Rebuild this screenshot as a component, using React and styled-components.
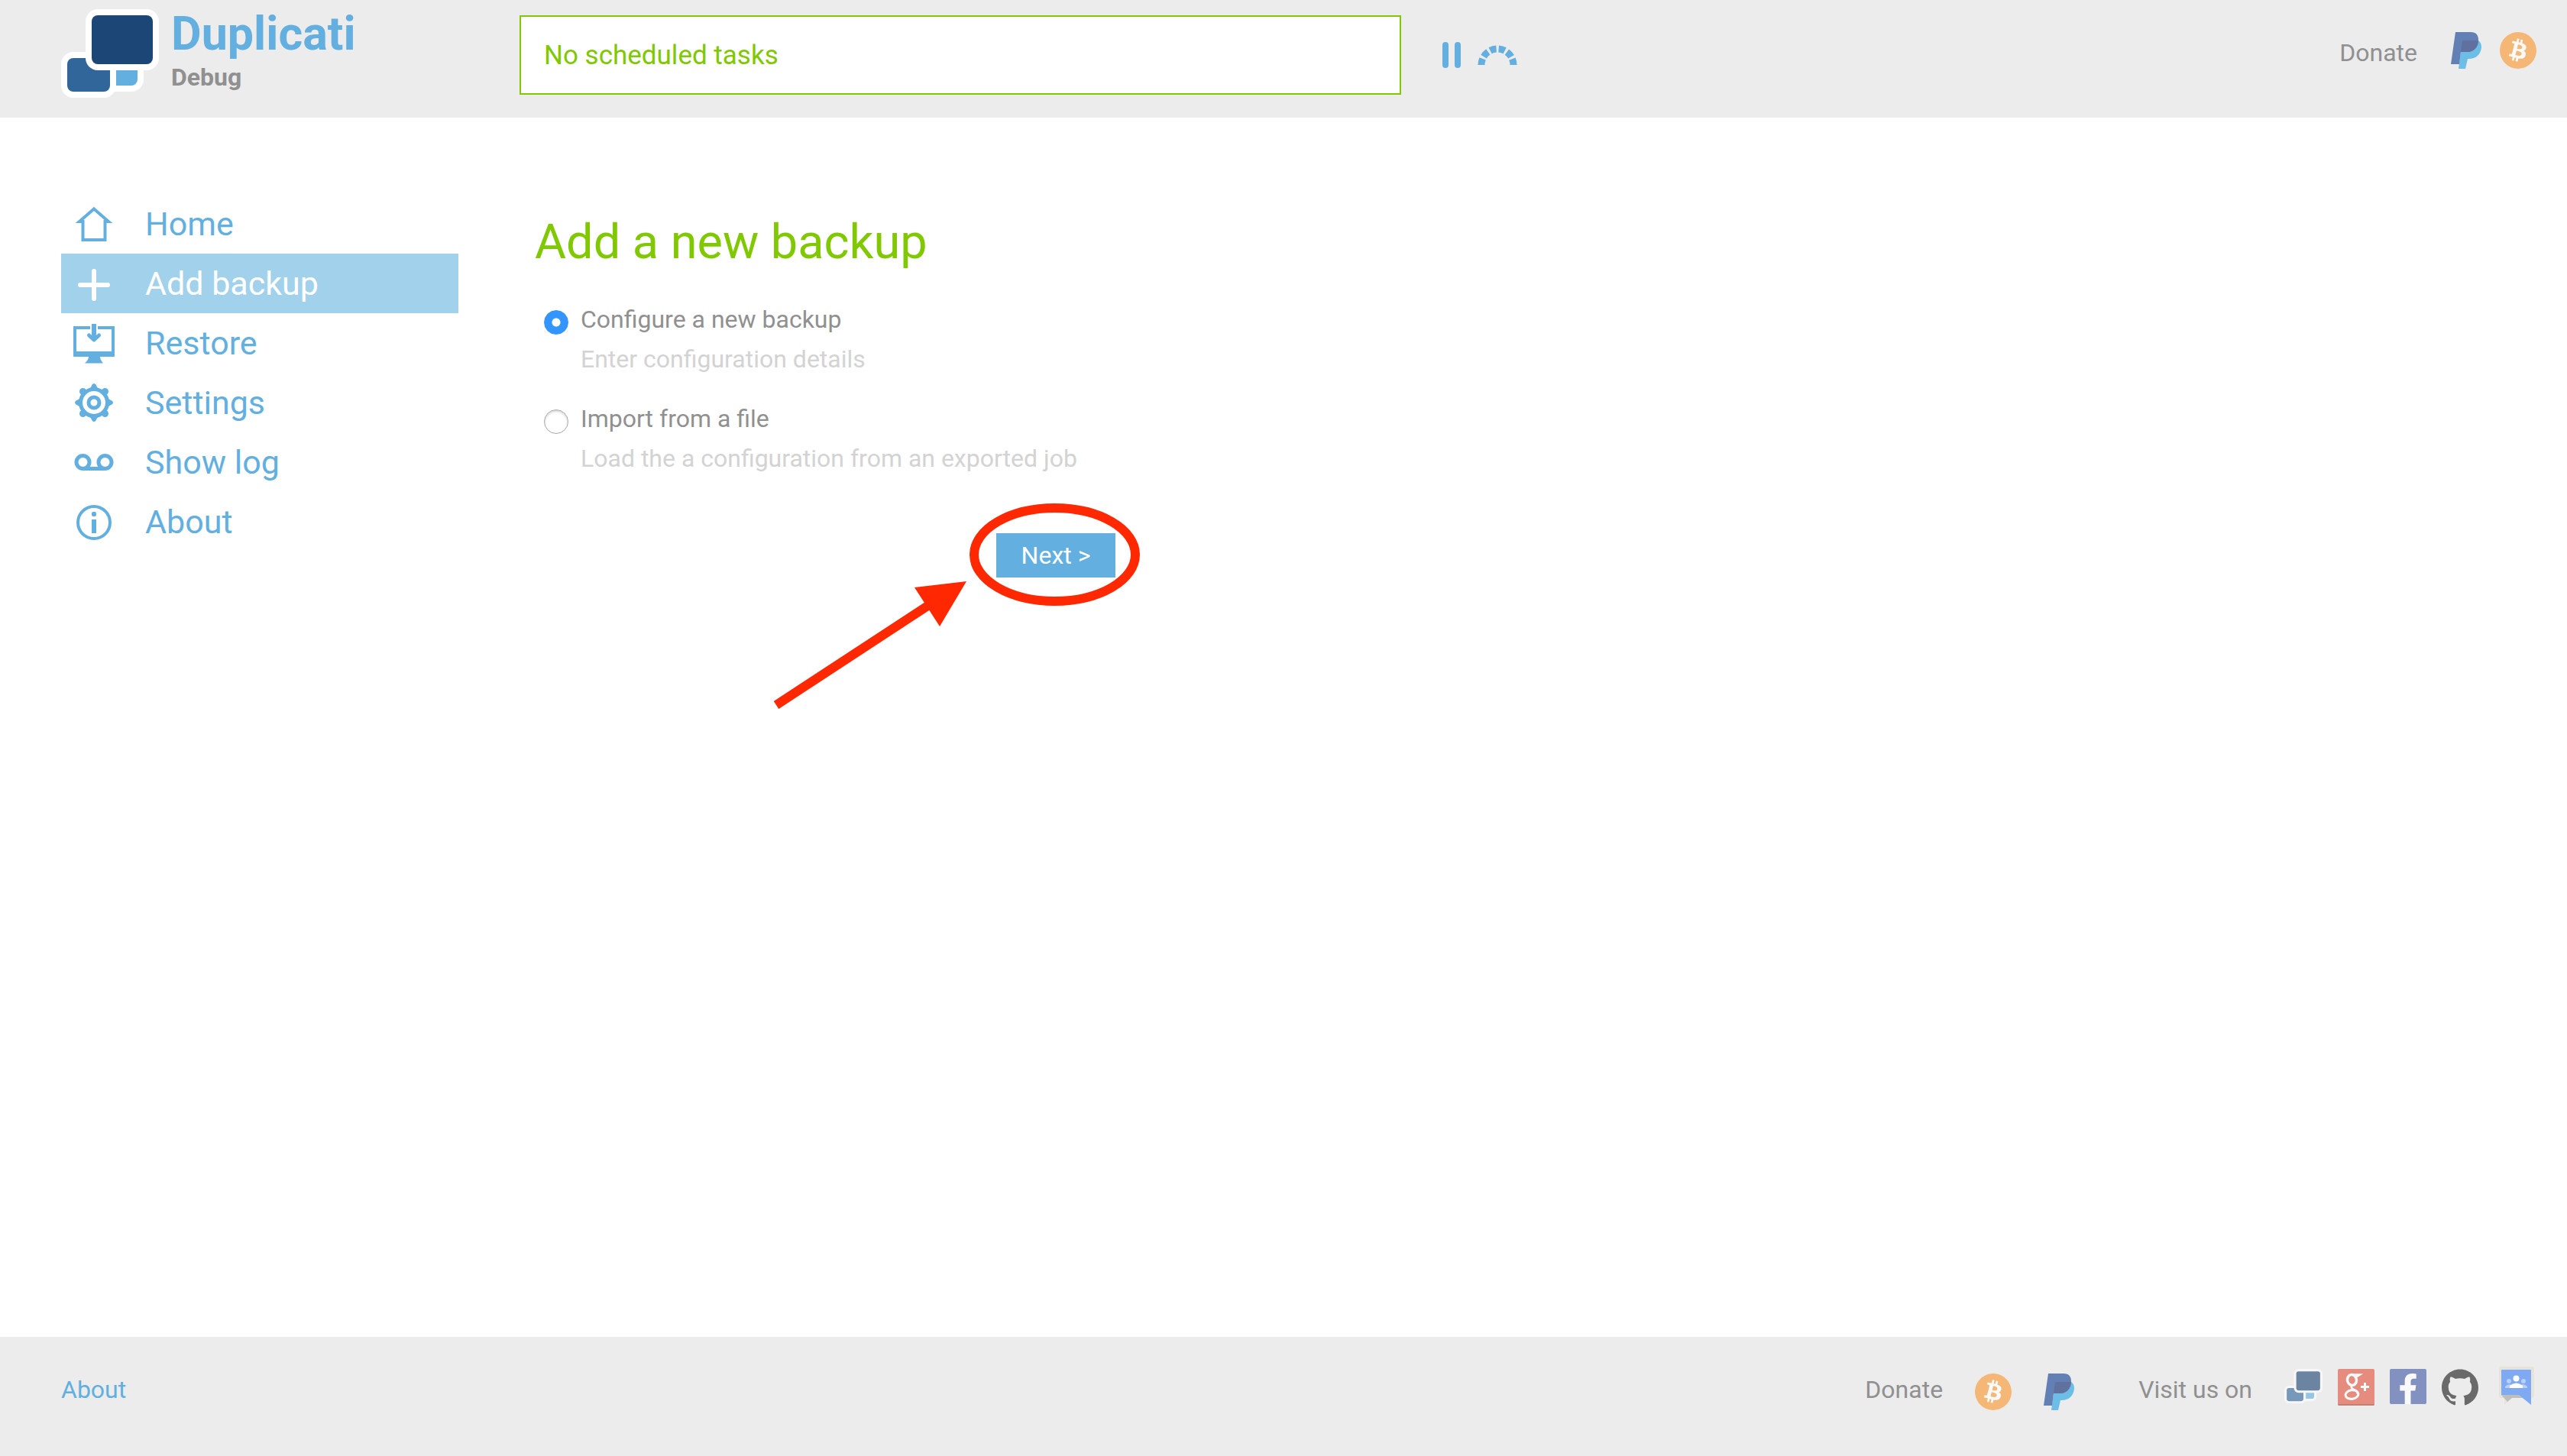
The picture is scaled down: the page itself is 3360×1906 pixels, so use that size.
import React, { useState } from "react";
import styled, { createGlobalStyle } from "styled-components";
import { SiBitcoin, SiGithub } from "react-icons/si";
import { FaFacebookF } from "react-icons/fa";

const color = {
  blue: "#62afe0",
  paleBlue: "#a2d1eb",
  green: "#80c800",
  grey: "#909090",
  lightGrey: "#d3d3d3",
  bar: "#ececec",
  radio: "#3395ff",
  red: "#ff2800",
};

const GlobalStyle = createGlobalStyle`
  *, *::before, *::after { box-sizing: border-box; }
  body {
    margin: 0;
    background: #fff;
    color: ${color.grey};
    font-family: Roboto, "Liberation Sans", sans-serif;
    font-size: 32px;
  }
  a { color: inherit; text-decoration: none; }
  button, input { font: inherit; }
  svg { display: block; flex: none; }
`;

const Page = styled.div`
  display: flex;
  flex-direction: column;
  min-height: 100vh;
`;

const Header = styled.header`
  display: flex;
  height: 154px;
  padding: 0 40px 0 80px;
  background: ${color.bar};
`;

const Brand = styled.a`
  display: flex;
  flex: 0 0 600px;
  align-items: flex-start;
  gap: 16px;
  padding-top: 12px;
`;

const BrandText = styled.div`
  display: flex;
  flex-direction: column;
`;

const BrandName = styled.span`
  color: ${color.blue};
  font-size: 61px;
  font-weight: 700;
  line-height: 64px;
`;

const BrandState = styled.span`
  font-weight: 700;
  line-height: 50px;
`;

const Status = styled.div`
  display: flex;
  flex: 0 1 1154px;
  align-items: center;
  height: 104px;
  margin-top: 20px;
  padding: 0 30px;
  border: 2px solid ${color.green};
  background: #fff;
  color: ${color.green};
  font-size: 35px;
`;

const Controls = styled.div`
  display: flex;
  align-items: center;
  gap: 22px;
  height: 104px;
  margin: 20px 0 0 54px;
`;

const IconButton = styled.button`
  padding: 0;
  border: 0;
  background: none;
  cursor: pointer;
`;

const HeaderDonate = styled.div`
  display: flex;
  align-items: flex-start;
  gap: 24px;
  margin-left: auto;
  padding-top: 42px;
`;

const BarText = styled.span`
  margin-right: ${(p) => p.$space || 0}px;
  line-height: 54px;
`;

const Main = styled.main`
  display: flex;
  flex: 1;
  gap: 100px;
  padding: 100px 80px;
`;

const Nav = styled.nav`
  display: flex;
  flex: 0 0 520px;
  flex-direction: column;
`;

const NavLink = styled.a`
  display: flex;
  align-items: center;
  gap: 40px;
  height: 78px;
  padding-left: 16px;
  background: ${(p) => (p.$active ? color.paleBlue : "transparent")};
  && { color: ${(p) => (p.$active ? "#fff" : color.blue)}; }
  font-size: 43px;
`;

const Form = styled.form`
  flex: 0 1 760px;
  padding-top: 28px;
`;

const Title = styled.h1`
  margin: 0 0 40px;
  color: ${color.green};
  font-size: 63px;
  font-weight: 400;
  line-height: 70px;
`;

const Options = styled.div`
  display: flex;
  flex-direction: column;
  gap: 26px;
  padding-left: 12px;
`;

const Option = styled.div`
  display: flex;
  align-items: flex-start;
  gap: 16px;
`;

const OptionText = styled.div`
  display: flex;
  flex-direction: column;
  line-height: 52px;
`;

const Hint = styled.span`
  color: ${color.lightGrey};
`;

const Radio = styled.input`
  flex: none;
  width: 32px;
  height: 32px;
  margin: 14px 0 0;
  border: 1px solid #a8a8a8;
  border-radius: 50%;
  background: #fff;
  box-shadow: inset 0 2px 3px #d8d8d8;
  appearance: none;
  &:checked {
    border-color: ${color.radio};
    background: radial-gradient(circle, #fff 5px, ${color.radio} 6px);
    box-shadow: none;
  }
`;

const Actions = styled.div`
  display: flex;
  justify-content: flex-end;
  margin-top: 72px;
`;

const ButtonWrap = styled.div`
  position: relative;
`;

const NextButton = styled.button`
  width: 156px;
  height: 58px;
  padding: 0;
  border: 0;
  background: ${color.blue};
  color: #fff;
`;

const Callout = styled.svg`
  position: absolute;
  top: -48px;
  right: -40px;
  pointer-events: none;
`;

const Footer = styled.footer`
  display: flex;
  align-items: flex-start;
  justify-content: space-between;
  padding: 42px 40px 60px 80px;
  background: ${color.bar};
`;

const FooterLink = styled.a`
  && { color: ${color.blue}; }
  line-height: 54px;
`;

const FooterGroups = styled.div`
  display: flex;
  gap: 84px;
`;

const DonateGroup = styled.div`
  display: flex;
  align-items: flex-end;
  gap: 42px;
`;

const SocialGroup = styled.div`
  display: flex;
  align-items: flex-start;
  gap: 20px;
`;

const Coin = styled.a`
  border-radius: 50%;
  background: #fafafa;
  color: #f4b776;
`;

const Faded = styled.a`
  opacity: 0.62;
`;

const Tile = styled.a`
  display: flex;
  align-items: flex-end;
  justify-content: flex-end;
  width: 48px;
  height: 46px;
  padding-right: 4px;
  border-radius: 2px;
  background: #8291bf;
  && { color: #fafafa; }
`;

const Logo = ({ width = 128 }) => (
  <svg width={width} viewBox="0 0 128 116" aria-hidden="true">
    <rect x="44" y="40" width="64" height="68" rx="16" fill="#fff" />
    <rect x="52" y="48" width="48" height="52" rx="8" fill="#62afe0" />
    <rect y="56" width="72" height="60" rx="16" fill="#fff" />
    <rect x="8" y="64" width="56" height="44" rx="8" fill="#30669a" />
    <rect x="32" width="96" height="80" rx="16" fill="#fff" />
    <rect x="40" y="8" width="80" height="64" rx="8" fill="#1c4676" />
  </svg>
);

const PayPal = () => (
  <svg width="40" height="48" viewBox="0 0 40 48" aria-hidden="true">
    <path d="M15 11H36C39 13 40 16 40 20C39 30 32 35 24 35H22L19 48H10Z" fill="#6cbee6" />
    <path d="M6 0H26C33 0 36 4 36 10C36 20 29 26 22 26H13L11 42H0Z" fill="#6280b3" />
    <path d="M15 11H36C36 20 29 26 22 26H13Z" fill="#60719f" />
  </svg>
);

const Bitcoin = () => (
  <Coin href="#bitcoin" aria-label="Donate with Bitcoin">
    <SiBitcoin size={48} />
  </Coin>
);

const Pause = () => (
  <svg width="24" height="34" viewBox="0 0 24 34" fill={color.blue} aria-hidden="true">
    <rect width="8" height="34" rx="4" />
    <rect x="16" width="8" height="34" rx="4" />
  </svg>
);

const Gauge = () => (
  <svg width="52" height="27" viewBox="0 0 52 27" aria-hidden="true">
    <path
      d="M5 26A21 21 0 0 1 47 26"
      fill="none"
      stroke={color.blue}
      strokeWidth="9"
      strokeDasharray="8.3 3.2"
    />
  </svg>
);

const GooglePlus = () => (
  <svg width="48" height="48" viewBox="0 0 48 48" aria-hidden="true">
    <rect width="48" height="48" rx="2" fill="#e68c7f" />
    <path d="M0 46H48V46Q48 48 46 48H2Q0 48 0 46Z" fill="#c08176" />
    <g fill="none" stroke="#fafafa">
      <ellipse cx="18.500" cy="14.500" rx="6" ry="7" strokeWidth="3.500" transform="rotate(-12 18.500 14.500)" />
      <ellipse cx="18.500" cy="33.500" rx="8.500" ry="5.800" strokeWidth="3" transform="rotate(-8 18.500 33.500)" />
      <path d="M18 7.500H29L26 9.500H22M20 21C15 24 19 26 23 28Q26 30 26 33" strokeWidth="2.500" />
      <path d="M30 23.500H41M35.500 18V29" strokeWidth="3" />
    </g>
  </svg>
);

const Groups = () => (
  <svg width="56" height="54" viewBox="0 0 56 54" overflow="visible" aria-hidden="true">
    <path d="M10-3H50Q53-3 53 0V35Q53 38 50 38H24L14 47V38H10Q7 38 7 35V0Q7-3 10-3Z" fill="#e6e4da" />
    <path d="M10 34H33L38 38H24L18 43Z" fill="#bfbfb9" />
    <path d="M11 1H48Q49 1 49 2V47L33 34H10V2Q10 1 11 1Z" fill="#7fa9f2" />
    <g fill="#b9d0f8">
      <circle cx="20" cy="16" r="3" />
      <circle cx="39" cy="16" r="3" />
      <path d="M15 25V23Q19 19 24 21L21 25ZM44 25V23Q40 19 35 21L38 25Z" />
    </g>
    <circle cx="29.500" cy="12.500" r="4" fill="#fff" />
    <path d="M21 25V22Q29.500 15 38 22V25Z" fill="#fff" />
  </svg>
);

const icons = {
  home: <path d="M27 7.500L46 24H41.500V48H12.500V24H8Z" strokeWidth="4" />,
  add: <path d="M27 11V47M9 29H45" strokeWidth="6" strokeLinecap="round" />,
  restore: (
    <>
      <path d="M22 7H2V40H52V7H32" strokeWidth="4" />
      <path d="M27 2V20" strokeWidth="6" />
      <path d="M20.500 17L27 23L33.500 17" strokeWidth="5" strokeLinecap="round" strokeLinejoin="round" />
      <path d="M0 38H54V44Q54 45 53 45H35Q35 49 39 53.500H15Q20 49 20 45H1Q0 45 0 44Z" fill="currentColor" stroke="none" />
    </>
  ),
  settings: (
    <>
      <circle cx="27" cy="27" r="17.500" strokeWidth="5" />
      <circle cx="27" cy="27" r="7" strokeWidth="5" />
      <g fill="currentColor" stroke="none">
        {[0, 90, 180, 270].map((angle) => (
          <g key={angle} transform={`rotate(${angle} 27 27)`}>
            <path d="M19 10Q23 8 24.500 3.500Q27 0.500 29.500 3.500Q31 8 35 10Z" />
            <circle cx="41.500" cy="12.500" r="4.500" />
          </g>
        ))}
      </g>
    </>
  ),
  log: (
    <>
      <circle cx="12.500" cy="27" r="8.500" strokeWidth="5" />
      <circle cx="41.500" cy="27" r="8.500" strokeWidth="5" />
      <path d="M12.500 35.500H41.500" strokeWidth="5" />
    </>
  ),
  about: (
    <>
      <circle cx="27" cy="28" r="21" strokeWidth="4" />
      <rect x="24" y="14" width="6" height="6" rx="2" fill="currentColor" stroke="none" />
      <rect x="24" y="24" width="6" height="18" fill="currentColor" stroke="none" />
    </>
  ),
};

const navItems = [
  ["home", "Home"],
  ["add", "Add backup"],
  ["restore", "Restore"],
  ["settings", "Settings"],
  ["log", "Show log"],
  ["about", "About"],
];

const options = [
  ["new", "Configure a new backup", "Enter configuration details"],
  ["import", "Import from a file", "Load the a configuration from an exported job"],
];

export default function App() {
  const [source, setSource] = useState("new");

  return (
    <Page>
      <GlobalStyle />
      <Header>
        <Brand href="#home">
          <Logo />
          <BrandText>
            <BrandName>Duplicati</BrandName>
            <BrandState>Debug</BrandState>
          </BrandText>
        </Brand>
        <Status role="status">No scheduled tasks</Status>
        <Controls>
          <IconButton type="button" aria-label="Pause"><Pause /></IconButton>
          <IconButton type="button" aria-label="Throttle"><Gauge /></IconButton>
        </Controls>
        <HeaderDonate>
          <BarText $space={20}>Donate</BarText>
          <a href="#paypal" aria-label="Donate with PayPal"><PayPal /></a>
          <Bitcoin />
        </HeaderDonate>
      </Header>

      <Main>
        <Nav>
          {navItems.map(([id, label]) => (
            <NavLink key={id} href={`#${id}`} $active={id === "add"}>
              <svg width="54" height="54" viewBox="0 0 54 54" fill="none" stroke="currentColor" aria-hidden="true">
                {icons[id]}
              </svg>
              {label}
            </NavLink>
          ))}
        </Nav>

        <Form onSubmit={(e) => e.preventDefault()}>
          <Title>Add a new backup</Title>
          <Options>
            {options.map(([value, label, hint]) => (
              <Option key={value}>
                <Radio
                  type="radio"
                  name="source"
                  id={value}
                  checked={source === value}
                  onChange={() => setSource(value)}
                />
                <OptionText>
                  <label htmlFor={value}>{label}</label>
                  <Hint>{hint}</Hint>
                </OptionText>
              </Option>
            ))}
          </Options>
          <Actions>
            <ButtonWrap>
              <NextButton type="submit">Next &gt;</NextButton>
              <Callout width="490" height="280" viewBox="0 0 490 280" aria-hidden="true">
                <ellipse cx="370.500" cy="76" rx="105.500" ry="61" fill="none" stroke={color.red} strokeWidth="12" />
                <path d="M6 273L212 138" stroke={color.red} strokeWidth="12" />
                <path d="M255 111L187 119L220 170Z" fill={color.red} />
              </Callout>
            </ButtonWrap>
          </Actions>
        </Form>
      </Main>

      <Footer>
        <FooterLink href="#about">About</FooterLink>
        <FooterGroups>
          <DonateGroup>
            <BarText>Donate</BarText>
            <Bitcoin />
            <a href="#paypal" aria-label="Donate with PayPal"><PayPal /></a>
          </DonateGroup>
          <SocialGroup>
            <BarText $space={22}>Visit us on</BarText>
            <Faded href="#website" aria-label="Duplicati website"><Logo width={50} /></Faded>
            <a href="#google-plus" aria-label="Google+"><GooglePlus /></a>
            <Tile href="#facebook" aria-label="Facebook"><FaFacebookF size={40} /></Tile>
            <Faded href="#github" aria-label="GitHub"><SiGithub size={48} color="#1b1b1b" /></Faded>
            <a href="#forum" aria-label="Forum"><Groups /></a>
          </SocialGroup>
        </FooterGroups>
      </Footer>
    </Page>
  );
}
